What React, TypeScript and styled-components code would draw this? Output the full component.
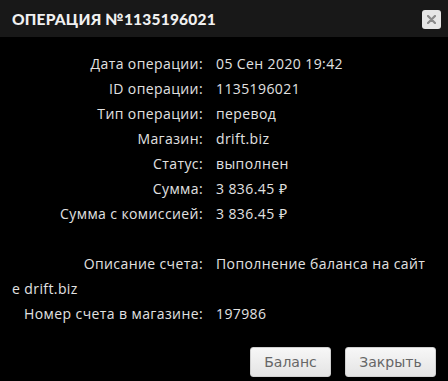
import React from "react";
import styled, { createGlobalStyle } from "styled-components";

const Global = createGlobalStyle`
  html, body { margin: 0; padding: 0; background: #000; }
  body { width: 448px; height: 381px; overflow: hidden; }
`;

const Dialog = styled.div`
  width: 448px;
  height: 381px;
  background: #000;
  display: flex;
  flex-direction: column;
  font-family: "Open Sans", sans-serif;
`;

const Header = styled.div`
  height: 37px;
  background: #181818;
  display: flex;
  align-items: center;
  justify-content: space-between;
  padding: 0 7px 0 12px;
  box-sizing: border-box;
`;

const Title = styled.div`
  color: #f0f0f0;
  font-family: "Lato", sans-serif;
  font-weight: 900;
  font-size: 15.5px;
  letter-spacing: 0.2px;
  padding-top: 1px;
`;

const CloseBtn = styled.button`
  width: 19px;
  height: 19px;
  border: none;
  border-radius: 3px;
  background: #e6e6e6;
  display: flex;
  align-items: center;
  justify-content: center;
  padding: 0;
  margin-top: 1px;
`;

const Body = styled.div`
  padding: 14px 18px 0 12px;
  color: #e2e2e2;
  font-size: 14px;
  line-height: 25px;
  letter-spacing: 0.4px;
`;

const Row = styled.div`
  word-break: break-all;
`;

const Spacer = styled.div`
  height: 25px;
`;

const Label = styled.span`
  display: inline-block;
  width: 191px;
  text-align: right;
  margin-right: 13px;
  word-break: normal;
`;

const Value = styled.span``;

const Footer = styled.div`
  display: flex;
  justify-content: flex-end;
  gap: 14px;
  padding: 0 12px 0 0;
  margin-top: 21px;
`;

const Button = styled.button<{ $w: number }>`
  width: ${(p) => p.$w}px;
  height: 30px;
  border: 1px solid #d0d0d0;
  border-radius: 3px;
  background: linear-gradient(#f7f7f7, #e4e4e4);
  color: #666;
  font-family: "DejaVu Sans", sans-serif;
  font-size: 14px;
  padding: 0;
`;

const rows: [string, string][] = [
  ["Дата операции:", "05 Сен 2020 19:42"],
  ["ID операции:", "1135196021"],
  ["Тип операции:", "перевод"],
  ["Магазин:", "drift.biz"],
  ["Статус:", "выполнен"],
  ["Сумма:", "3 836.45 ₽"],
  ["Сумма с комиссией:", "3 836.45 ₽"],
];

export default function App() {
  return (
    <>
      <Global />
      <Dialog>
        <Header>
          <Title>ОПЕРАЦИЯ №1135196021</Title>
          <CloseBtn aria-label="close">
            <svg width="9" height="9" viewBox="0 0 9 9">
              <path d="M1 1 L8 8 M8 1 L1 8" stroke="#8a8a8a" strokeWidth="2.2" strokeLinecap="round" />
            </svg>
          </CloseBtn>
        </Header>
        <Body>
          {rows.map(([l, v]) => (
            <Row key={l}>
              <Label>{l}</Label>
              <Value>{v}</Value>
            </Row>
          ))}
          <Spacer />
          <Row>
            <Label>Описание счета:</Label>
            <Value>Пополнение баланса на сайте drift.biz</Value>
          </Row>
          <Row>
            <Label>Номер счета в магазине:</Label>
            <Value>197986</Value>
          </Row>
        </Body>
        <Footer>
          <Button $w={81}>Баланс</Button>
          <Button $w={91}>Закрыть</Button>
        </Footer>
      </Dialog>
    </>
  );
}
